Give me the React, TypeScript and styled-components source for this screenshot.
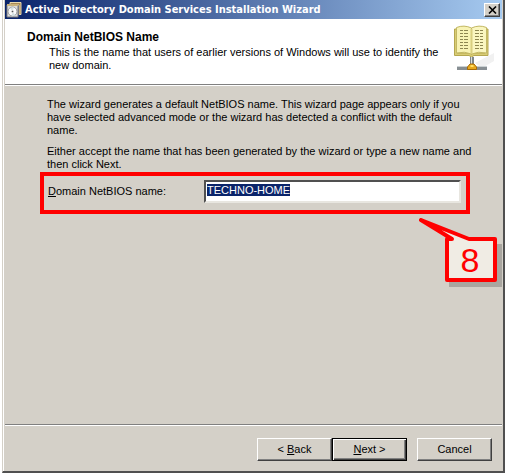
import React, { useEffect, useRef } from "react";
import styled, { createGlobalStyle } from "styled-components";

const FACE = "#d4d0c8";

const GlobalStyle = createGlobalStyle`
  * { box-sizing: border-box; }
  html, body, #root { height: 100%; margin: 0; }
  body {
    background: #fff;
    color: #000;
    font: 11px/13px "Liberation Sans", Arial, sans-serif;
    overflow: hidden;
  }
`;

const Desktop = styled.div`
  min-height: 100%;
  display: flex;
  padding: 0 2px 1px 2px;
`;

const Window = styled.main`
  flex: 1;
  display: flex;
  flex-direction: column;
  background: ${FACE};
  border-style: solid;
  border-width: 0 2px 2px 1px;
  border-color: #404040 #505050 #505050 #d4d0c8;
  box-shadow: inset 1px 0 #fff;
  padding: 0 1px 0 2px;
`;

const TitleBar = styled.header`
  display: flex;
  align-items: center;
  gap: 3px;
  height: 19px;
  padding: 0 2px 0 1px;
  background: linear-gradient(90deg, #0a246a, #a6caf0);
`;

const Title = styled.h1`
  flex: 1;
  margin: 0;
  padding-top: 1px;
  color: #fff;
  font: bold 11px/18px "DejaVu Sans Condensed", "DejaVu Sans", sans-serif;
  white-space: nowrap;
`;

const CloseButton = styled.button`
  display: flex;
  align-items: center;
  justify-content: center;
  width: 16px;
  height: 14px;
  padding: 0;
  background: ${FACE};
  border: 1px solid;
  border-color: #fff #404040 #404040 #fff;
  box-shadow: inset -1px -1px #808080;
`;

const Banner = styled.section`
  display: flex;
  justify-content: space-between;
  height: 66px;
  padding: 0 7px 0 22px;
  background: #fff;
  border-bottom: 1px solid #808080;
`;

const BannerText = styled.div`
  padding-top: 12px;
`;

const BannerArt = styled.div`
  flex: none;
  padding-top: 6px;
`;

const Heading = styled.h2`
  margin: 0;
  font-size: 12px;
  line-height: 13px;
`;

const Subtitle = styled.p`
  margin: 2px 0 0 22px;
  max-width: 392px;
`;

const Content = styled.form`
  flex: 1;
  display: flex;
  flex-direction: column;
  border-top: 1px solid #fff;
  padding: 12px 24px 0 35px;
`;

const Intro = styled.div`
  display: grid;
  gap: 8px;
  padding: 0 0 1px 7px;
`;

const Paragraph = styled.p`
  margin: 0;
`;

const Highlight = styled.div`
  display: flex;
  align-items: flex-start;
  height: 42px;
  margin-right: 8px;
  border: 4px solid #f00;
  padding: 4px 5px 4px 4px;
`;

const FieldLabel = styled.label`
  width: 156px;
  padding-top: 5px;
`;

const NameInput = styled.input`
  flex: 1;
  min-width: 0;
  height: 23px;
  padding: 0 1px 3px;
  background: #fff;
  border: 2px solid;
  border-color: #505050 #e8e6e0 #e8e6e0 #505050;
  outline: none;
  font: inherit;
  &::selection { background: #0a246a; color: #fff; }
`;

const CalloutAnchor = styled.div`
  position: relative;
`;

const Callout = styled.svg`
  position: absolute;
  top: 4px;
  right: -25px;
`;

const Footer = styled.footer`
  display: flex;
  justify-content: flex-end;
  height: 47px;
  padding: 13px 10px 0;
  border-top: 1px solid #808080;
  box-shadow: inset 0 1px #fff;
`;

const Button = styled.button<{ $primary?: boolean; $apart?: boolean }>`
  width: 75px;
  height: 23px;
  margin-left: ${(p) => (p.$apart ? "10px" : "0")};
  padding: 0;
  background: ${FACE};
  color: #000;
  font: inherit;
  border: 1px solid;
  border-color: ${(p) => (p.$primary ? "#000" : "#fff #404040 #404040 #fff")};
  box-shadow: ${(p) =>
    p.$primary
      ? "inset 1px 1px #fff, inset -1px -1px #404040, inset -2px -2px #808080"
      : "inset -1px -1px #808080"};
`;

function InstallerIcon() {
  return (
    <svg width="16" height="17" viewBox="0 0 16 17" aria-hidden="true">
      <path d="M4 1.5h11v12h-2V4H4z" fill="#a98a55" stroke="#e8d9b0" />
      <path d="M1 4h11v12H1z" fill="#dcdcdc" stroke="#77777a" />
      <path d="M1 3h11v2H1z" fill="#c9b27c" />
      <circle cx="6.5" cy="10.5" r="4.5" fill="#fafafa" stroke="#999" />
      <path d="M6.5 10.5L4 7l4-1zM6.5 10.5l3 4-4 1z" fill="#d4e0e2" />
      <circle cx="6.5" cy="10.5" r="1.3" fill="#555" stroke="#fff" />
    </svg>
  );
}

function DirectoryIcon() {
  const lines = [0, 1, 2, 3, 4, 5, 6];
  return (
    <svg width="42" height="48" viewBox="0 0 42 48" aria-hidden="true">
      <path d="M22 38L41 28v8L29 43z" fill="#f1f1f1" />
      <path d="M1.500 4H4v24h13l1.500 1.500L20 28h12V4h3v26.500H21L18.500 32 16 30.500H1.500z" fill="#d8cc74" stroke="#b5a750" />
      <path d="M3.500 2.500Q11-.5 18.500 3v26q-7-3-15-1z" fill="#f8f3b4" stroke="#c3b864" />
      <path d="M33.500 2.500Q26-.5 18.500 3v26q7-3 15-1z" fill="#faf6c0" stroke="#c3b864" />
      <path d="M17.500 4h2v25h-2z" fill="#d9cf80" />
      {lines.map((n) => (
        <path
          key={n}
          d={`M7 ${5.5 + n * 3}h3M11 ${5.5 + n * 3}h4M22 ${5.5 + n * 3}h4M27 ${5.5 + n * 3}h3`}
          stroke="#8d8650"
        />
      ))}
      <path d="M17 32h4v8h-4z" fill="#7f878a" />
      <path d="M18 32h1v8h-1z" fill="#d9dfe0" />
      <path d="M4 41h30v4H4z" fill="#888f93" />
      <path d="M4 41h30v1H4z" fill="#cbd1d3" />
      <path d="M17 39h4l2.500 3v2.500h-9V42z" fill="#e8a91c" stroke="#a66b08" />
      <path d="M17.500 40h3v2h-3z" fill="#ffe064" />
    </svg>
  );
}

export default function App() {
  const field = useRef<HTMLInputElement>(null);

  useEffect(() => {
    field.current?.focus();
    field.current?.select();
  }, []);

  return (
    <>
      <GlobalStyle />
      <Desktop>
        <Window>
          <TitleBar>
            <InstallerIcon />
            <Title>Active Directory Domain Services Installation Wizard</Title>
            <CloseButton type="button" aria-label="Close">
              <svg width="9" height="8" viewBox="0 0 9 8" aria-hidden="true">
                <path d="M1 0.500l7 7M8 0.500L1 7.500" stroke="#000" strokeWidth="1.6" />
              </svg>
            </CloseButton>
          </TitleBar>
          <Banner>
            <BannerText>
              <Heading>Domain NetBIOS Name</Heading>
              <Subtitle>
                This is the name that users of earlier versions of Windows will use to identify the new domain.
              </Subtitle>
            </BannerText>
            <BannerArt>
              <DirectoryIcon />
            </BannerArt>
          </Banner>
          <Content id="wizard" onSubmit={(e) => e.preventDefault()}>
            <Intro>
              <Paragraph>
                The wizard generates a default NetBIOS name. This wizard page appears only if you have selected
                advanced mode or the wizard has detected a conflict with the default name.
              </Paragraph>
              <Paragraph>
                Either accept the name that has been generated by the wizard or type a new name and then click Next.
              </Paragraph>
            </Intro>
            <Highlight>
              <FieldLabel htmlFor="netbios"><u>D</u>omain NetBIOS name:</FieldLabel>
              <NameInput id="netbios" ref={field} defaultValue="TECHNO-HOME" spellCheck={false} />
            </Highlight>
            <CalloutAnchor>
              <Callout width="84" height="76" viewBox="0 0 84 76" role="img" aria-label="8">
                <path d="M30 26h53v43H30z" fill="#a9a6a0" />
                <path d="M2 2L50 21H76V62H28V21H33Z" fill="#f0ece4" stroke="#f00" strokeWidth="4" strokeLinejoin="round" />
                <text x="51" y="54" textAnchor="middle" fill="#f00" fontFamily="Liberation Sans, Arial, sans-serif" fontSize="34">8</text>
              </Callout>
            </CalloutAnchor>
          </Content>
          <Footer>
            <Button type="button">&lt; <u>B</u>ack</Button>
            <Button type="submit" form="wizard" $primary><u>N</u>ext &gt;</Button>
            <Button type="button" $apart>Cancel</Button>
          </Footer>
        </Window>
      </Desktop>
    </>
  );
}
